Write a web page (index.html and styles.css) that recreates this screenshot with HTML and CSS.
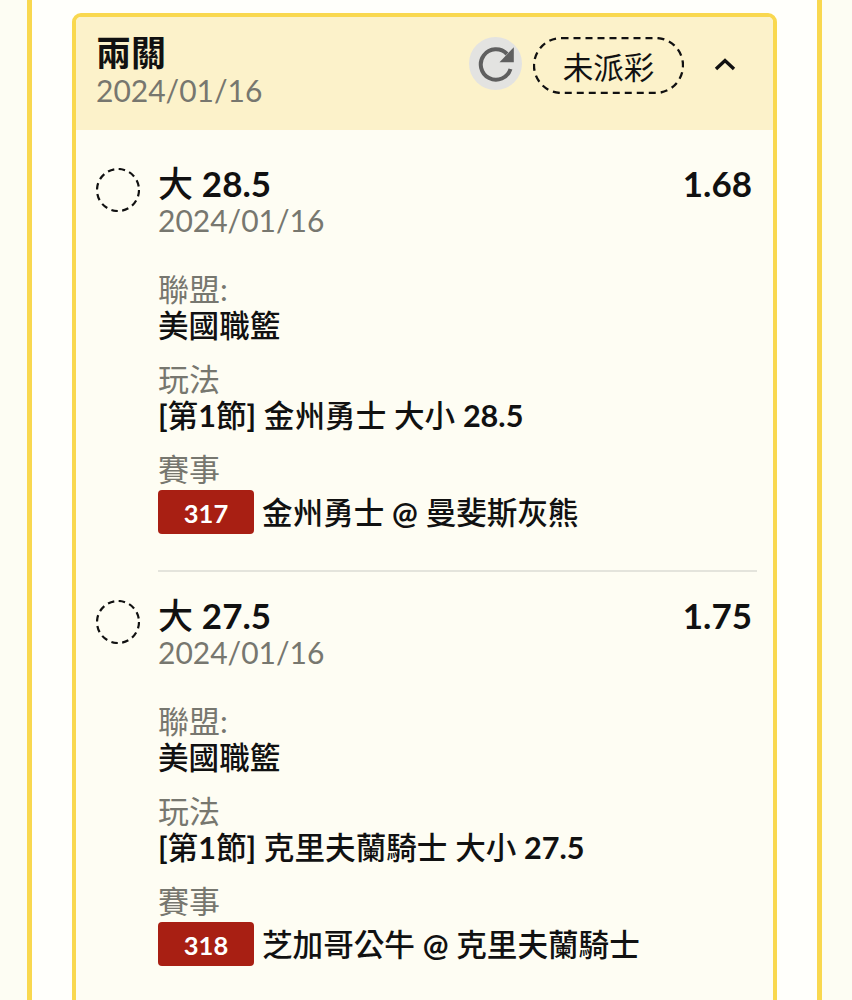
FILE: index.html
```html
<!DOCTYPE html>
<html lang="zh-Hant">
<head>
    <meta charset="UTF-8">
    <meta name="viewport" content="width=device-width, initial-scale=1.0">
    <title>兩關</title>
    <link rel="stylesheet" href="styles.css">
</head>
<body>
    <div class="panel">
        <div class="card">
            <div class="card-head">
                <div class="head-title">
                    <div class="title">兩關</div>
                    <div class="date">2024/01/16</div>
                </div>
                <div class="refresh">
                    <svg width="38" height="38" viewBox="0 0 38 38">
                        <path d="M33.500 24 A15.200 15.200 0 1 1 30 9" fill="none" stroke="#5f5f5f" stroke-width="4"/>
                        <path d="M36.800 2.200 V17.200 H22.500 Z" fill="#5f5f5f"/>
                    </svg>
                </div>
                <div class="status">
                    <svg class="status-ring" width="151" height="57" viewBox="0 0 151 57">
                        <rect x="1" y="1" width="149" height="55" rx="27.500" fill="none" stroke="#111" stroke-width="2.300" stroke-dasharray="7 5"/>
                    </svg>
                    未派彩
                </div>
                <svg class="chevron" width="22" height="14" viewBox="0 0 22 14">
                    <path d="M2 12 L11 3.500 L20 12" fill="none" stroke="#111" stroke-width="3.400"/>
                </svg>
            </div>
            <div class="card-body">
                <div class="leg">
                    <svg class="pick-circle" width="44" height="44" viewBox="0 0 44 44">
                        <circle cx="22" cy="22" r="21" fill="none" stroke="#111" stroke-width="2.200" stroke-dasharray="6.500 4.500"/>
                    </svg>
                    <div class="leg-main">
                        <div class="leg-top">
                            <div class="pick">大 <span class="num">28.5</span></div>
                            <div class="odds">1.68</div>
                        </div>
                        <div class="date">2024/01/16</div>
                        <div class="label label-first">聯盟:</div>
                        <div class="value">美國職籃</div>
                        <div class="label">玩法</div>
                        <div class="value"><span class="num">[</span>第<span class="num">1</span>節<span class="num">]</span> 金州勇士 大小 <span class="num">28.5</span></div>
                        <div class="label label-last">賽事</div>
                        <div class="match">
                            <span class="match-no">317</span>
                            <span class="value">金州勇士 <span class="num">@</span> 曼斐斯灰熊</span>
                        </div>
                    </div>
                </div>
                <div class="leg leg-divided">
                    <svg class="pick-circle" width="44" height="44" viewBox="0 0 44 44">
                        <circle cx="22" cy="22" r="21" fill="none" stroke="#111" stroke-width="2.200" stroke-dasharray="6.500 4.500"/>
                    </svg>
                    <div class="leg-main">
                        <div class="leg-top">
                            <div class="pick">大 <span class="num">27.5</span></div>
                            <div class="odds">1.75</div>
                        </div>
                        <div class="date">2024/01/16</div>
                        <div class="label label-first">聯盟:</div>
                        <div class="value">美國職籃</div>
                        <div class="label">玩法</div>
                        <div class="value"><span class="num">[</span>第<span class="num">1</span>節<span class="num">]</span> 克里夫蘭騎士 大小 <span class="num">27.5</span></div>
                        <div class="label label-last">賽事</div>
                        <div class="match">
                            <span class="match-no">318</span>
                            <span class="value">芝加哥公牛 <span class="num">@</span> 克里夫蘭騎士</span>
                        </div>
                    </div>
                </div>
            </div>
        </div>
    </div>
</body>
</html>
```

FILE: styles.css
```css
html, body {
    height: 1000px;
    overflow: hidden;
}

body {
    margin: 0;
    background-color: #fdfdf3;
    font-family: Lato, "Noto Sans CJK TC", sans-serif;
    color: #111;
}

.panel {
    box-sizing: border-box;
    width: 795px;
    height: 1000px;
    margin-left: 27px;
    padding: 13px 40px 0 41px;
    overflow: hidden;
    background-color: #fffffb;
    border-left: 5px solid #f9d84f;
    border-right: 5px solid #f9d84f;
}

.card {
    box-sizing: border-box;
    width: 705px;
    margin-left: -1px;
    height: 1040px;
    background-color: #fefdf3;
    border: 4px solid #f9d84f;
    border-radius: 9px;
}

.card-head {
    display: flex;
    align-items: flex-start;
    height: 113px;
    padding-left: 20px;
    background-color: #fcf2ca;
    border-radius: 5px 5px 0 0;
}

.head-title {
    flex: 1;
    padding-top: 15px;
}

.title {
    font-size: 35px;
    font-weight: 700;
    line-height: 41px;
}

.date {
    font-size: 30px;
    line-height: 34px;
    color: #77776f;
}

.refresh {
    display: flex;
    align-items: center;
    justify-content: center;
    width: 53px;
    height: 53px;
    margin-top: 20px;
    border-radius: 50%;
    background-color: #e3e3e1;
}

.status {
    position: relative;
    box-sizing: border-box;
    width: 151px;
    height: 57px;
    margin: 20px 0 0 11px;
    font-size: 30.500px;
    line-height: 60px;
    text-align: center;
}

.status-ring {
    position: absolute;
    top: 0;
    left: 0;
}

.chevron {
    margin: 40px 37px 0 30px;
}

.leg {
    display: flex;
    margin-left: 20px;
    padding-top: 38px;
}

.leg-divided {
    padding-top: 0;
    margin-top: 36px;
}

.pick-circle {
    flex: none;
}

.leg-main {
    width: 599px;
    margin-left: 18px;
}

.leg-divided .leg-main {
    padding-top: 28px;
    border-top: 2px solid #e4e4dc;
}

.leg-divided .pick-circle {
    margin-top: 30px;
}

.leg-top {
    display: flex;
    justify-content: space-between;
    margin-bottom: 5px;
    padding-right: 5px;
    font-size: 35px;
    font-weight: 500;
    line-height: 30px;
}

.num, .odds {
    font-weight: 700;
}

.label {
    margin-top: 17px;
    font-size: 31px;
    line-height: 39px;
    color: #77776f;
}

.label-first {
    margin-top: 33px;
}

.label-last {
    margin-bottom: 1px;
}

.value {
    font-size: 30.600px;
    font-weight: 500;
    line-height: 34px;
}

.match {
    display: flex;
    align-items: center;
    gap: 8px;
}

.match .value {
    margin-top: 2px;
}

.match-no {
    width: 96px;
    height: 44px;
    background-color: #a81f13;
    border-radius: 4px;
    color: #fff;
    font-size: 25.500px;
    font-weight: 700;
    line-height: 46px;
    text-align: center;
}
```
